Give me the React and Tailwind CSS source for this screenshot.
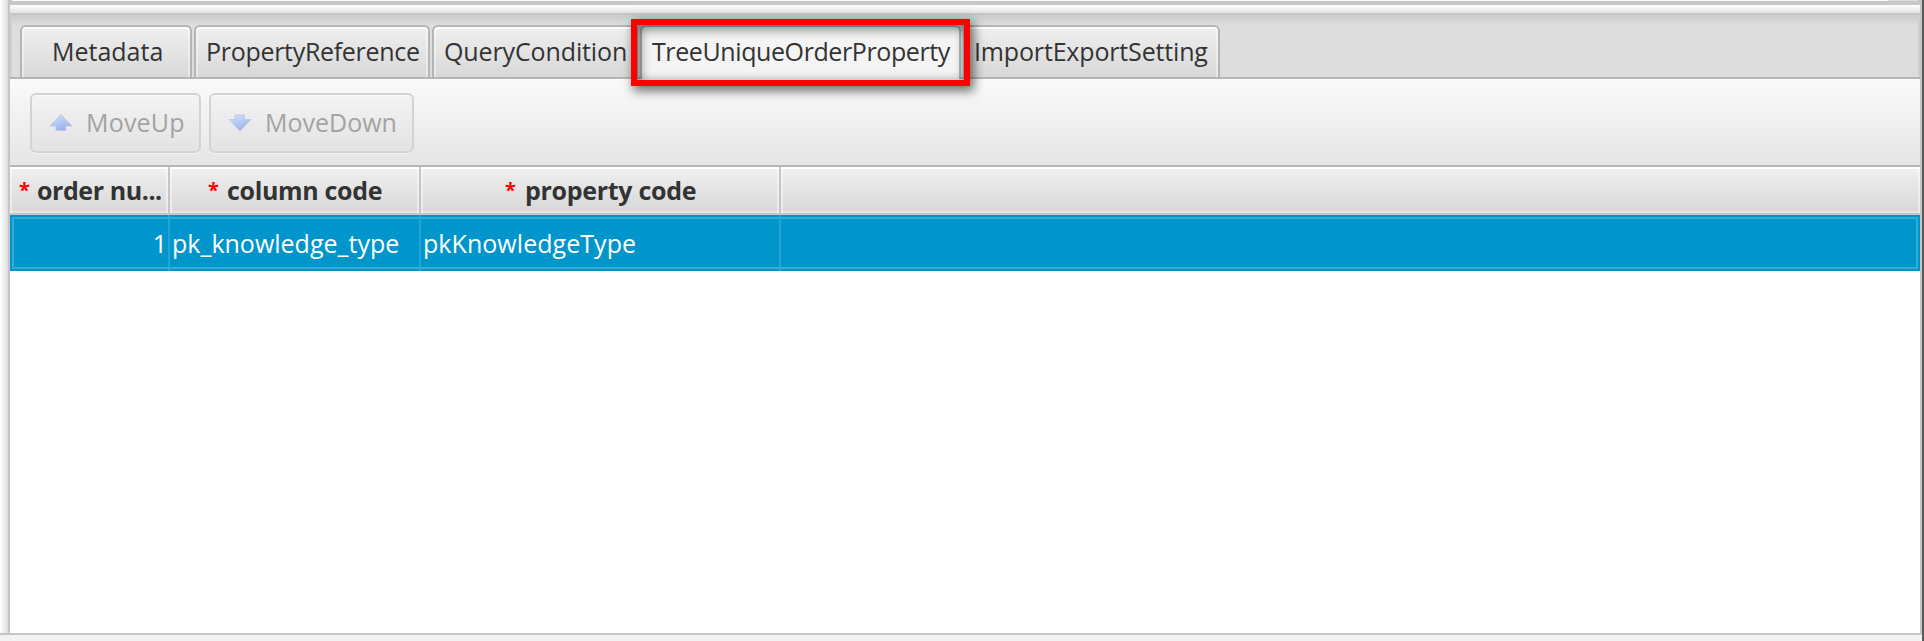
const tabs = [
  { label: "Metadata", box: "w-[172px] pl-[30px]" },
  { label: "PropertyReference", box: "w-[236px] pl-[10px] tracking-[-0.3px]" },
  { label: "QueryCondition", box: "w-[206px] pl-[10px] tracking-[-0.12px]" },
  { label: "TreeUniqueOrderProperty", box: "w-[321px] pl-[10px] tracking-[-0.4px]", active: true },
  { label: "ImportExportSetting", box: "w-[257px] pl-[9px] tracking-[-0.16px]" },
];

const columns = [
  { title: "order nu...", box: "w-[160px] border-r-2 pl-[9px]", text: "ml-[6px] tracking-[-0.43px]" },
  { title: "column code", box: "w-[251px] border-r-2 pl-[38px]", text: "ml-[7px] tracking-[-0.33px]" },
  { title: "property code", box: "w-[360px] border-r-2 pl-[84px]", text: "ml-[8px] tracking-[-0.3px]" },
  { title: "", box: "flex-1", text: "" },
];

function Tab({ label, box, active }) {
  const fill = active
    ? "h-[54px] bg-[#f4f4f4]"
    : "h-[52px] bg-linear-to-b from-[#efefef] to-[#d8d8d8] shadow-[inset_0_2px_0_#fff,inset_2px_0_0_rgba(255,255,255,0.4),inset_-2px_0_0_rgba(255,255,255,0.4)]";
  return (
    <div className={`${box} ${fill} shrink-0 whitespace-nowrap rounded-t-[6px] border-2 border-b-0 border-[#b5b5b5] pt-[7px]`}>
      {label}
    </div>
  );
}

function ArrowIcon({ down }) {
  return (
    <svg className="mt-[8px] h-[20px] w-[26px] shrink-0" viewBox="0 0 26 20">
      <defs>
        <linearGradient id={down ? "arrow-down" : "arrow-up"} x1="0.2" y1="0" x2="0.7" y2="1">
          <stop offset="0" stopColor="#d4dff6" />
          <stop offset="0.5" stopColor="#b3c7f3" />
          <stop offset="1" stopColor="#94aee8" />
        </linearGradient>
      </defs>
      {down ? (
        <path d="M8 2h9.5v4.5H24L13 18 2 6.5h6z" fill="url(#arrow-down)" stroke="#b9c7e6" strokeWidth="0.9" strokeLinejoin="round" />
      ) : (
        <path d="M13 1.5 24 13h-6.2v4.5H8V13H2z" fill="url(#arrow-up)" stroke="#b9c7e6" strokeWidth="0.9" strokeLinejoin="round" />
      )}
    </svg>
  );
}

function ToolButton({ label, box, down }) {
  return (
    <button
      disabled
      className={`${box} flex h-[60px] items-start rounded-[6px] border-2 border-[#d3d3d3] bg-linear-to-b from-[#f3f3f3] to-[#e3e3e3] pl-[16px] pt-[10px] text-[#a3a3a3] shadow-[inset_0_1px_0_#f8f8f8,0_1px_0_#f2f2f2]`}
    >
      <ArrowIcon down={down} />
      <span className="ml-[12px]">{label}</span>
    </button>
  );
}

export default function App() {
  return (
    <div className="flex h-[641px] w-[1924px] overflow-hidden bg-[#f2f2f2] font-['Open_Sans','Noto_Sans',sans-serif] text-[25px] leading-[34px] text-[#333]">
      <div className="flex min-w-0 flex-1 flex-col">
        <div className="flex h-[633px]">
          <div className="w-[8px] bg-linear-to-r from-white to-[#dcdcdc]" />
          <div className="w-[2px] bg-[#c5c5c5]" />
          <main className="flex min-w-0 flex-1 flex-col bg-white">
            <div className="flex h-px bg-[#c5c5c5] pl-[2px]">
              <div className="w-[1876px] bg-[#fafafa]" />
              <div className="w-[30px] bg-[#dcdcdc]" />
            </div>
            <div className="h-[4px] bg-[#c7c8c8]" />
            <div className="h-[8px] bg-linear-to-b from-white to-[#e3e3e3]" />
            <div className="h-[2px] bg-[#c5c5c5]" />

            <nav className="relative flex h-[64px] gap-[2px] border-b-2 border-b-[#b5b5b5] bg-[#ddd] bg-[linear-gradient(to_bottom,#cacaca,#ddd_10px)] pl-[10px] pt-[10px] shadow-[inset_2px_0_0_#cfcfcf,inset_-2px_0_0_#cfcfcf]">
              {tabs.map((tab) => (
                <Tab key={tab.label} {...tab} />
              ))}
              <div className="pointer-events-none absolute left-[621px] top-[4px] h-[67px] w-[339px] border-[6px] border-[#f00] shadow-[3px_4px_10px_1px_rgba(0,0,0,0.55),inset_2px_3px_11px_1px_rgba(0,0,0,0.5)]" />
            </nav>

            <div className="flex h-[88px] gap-[8px] border-b-2 border-[#b5b5b5] bg-linear-to-b from-[#fafafa] to-[#e5e5e5] pl-[20px] pt-[14px]">
              <ToolButton label="MoveUp" box="w-[171px] tracking-[0.2px]" />
              <ToolButton label="MoveDown" box="w-[205px]" down />
            </div>

            <div className="flex h-[48px] border-b-2 border-[#c5c5c5] font-bold">
              {columns.map((column) => (
                <div
                  key={column.title}
                  className={`${column.box} flex whitespace-nowrap border-[#c5c5c5] bg-linear-to-b from-[#f0f0f0] to-[#d7d7d7] pt-[6px] shadow-[inset_0_2px_0_#fff,inset_2px_0_0_rgba(255,255,255,0.45),inset_-2px_0_0_rgba(255,255,255,0.45),inset_0_-2px_0_rgba(255,255,255,0.3)]`}
                >
                  {column.title && <span className="w-[12px] text-[20px] text-[#f00]">*</span>}
                  <span className={column.text}>{column.title}</span>
                </div>
              ))}
            </div>

            <div className="relative flex h-[56px] bg-[#0096cc] text-white">
              <div className="w-[160px] border-r-2 border-[#22a4d4] pr-px pt-[11px] text-right">1</div>
              <div className="w-[251px] border-r-2 border-[#22a4d4] pl-[2px] pt-[11px]">pk_knowledge_type</div>
              <div className="w-[360px] border-r-2 border-[#22a4d4] pl-[2px] pt-[11px] tracking-[0.05px]">pkKnowledgeType</div>
              <div className="pointer-events-none absolute inset-[2px] border-2 border-[#33abd7]" />
            </div>
          </main>
          <div className="w-[2px] bg-[#c5c5c5]" />
        </div>
        <div className="h-[2px] bg-[#c5c5c5]" />
      </div>
      <div className="w-[2px] bg-[#5a5a5a]" />
    </div>
  );
}
